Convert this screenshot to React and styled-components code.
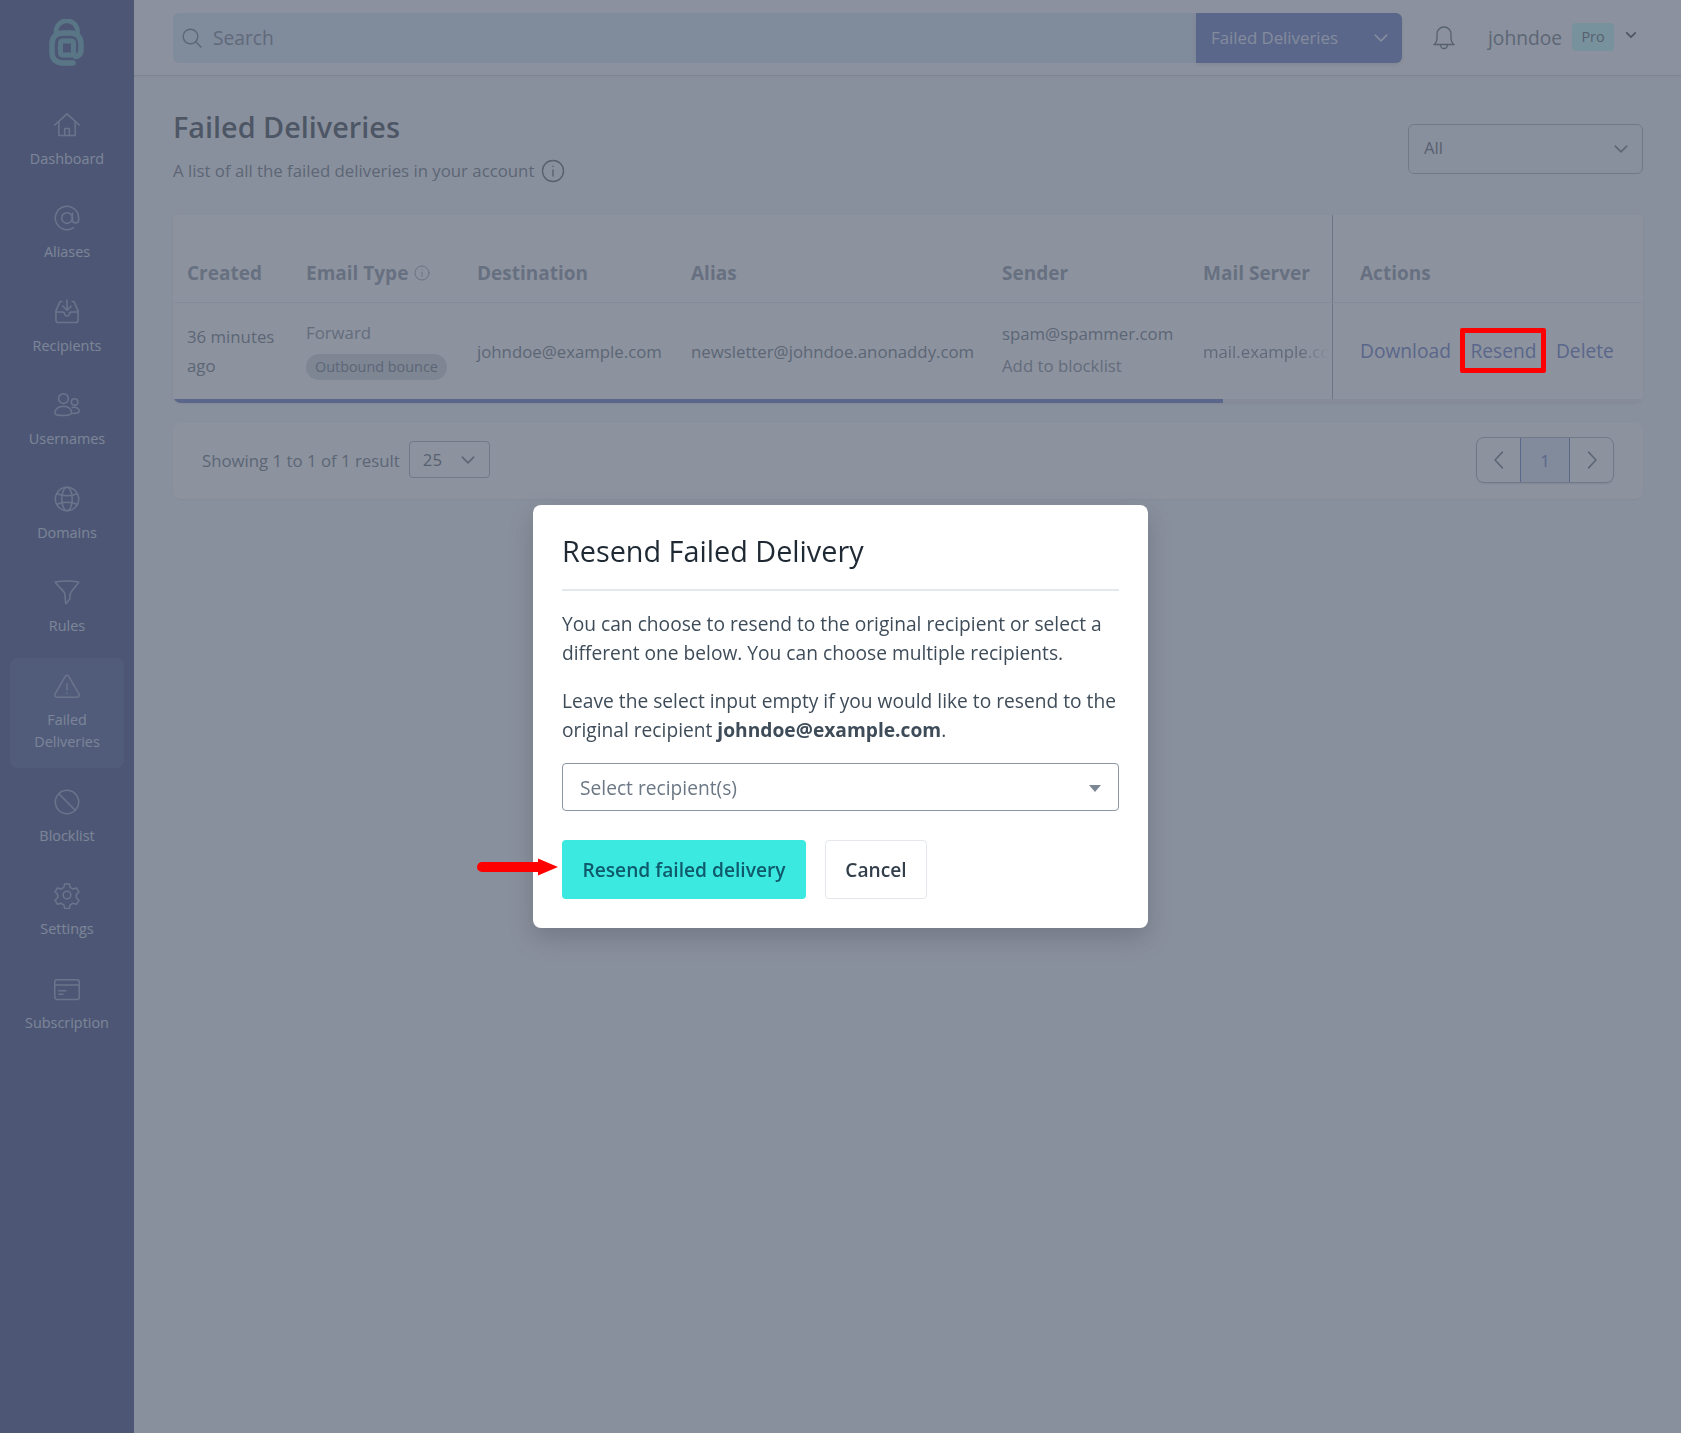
import React from 'react'
import styled, { createGlobalStyle } from 'styled-components'

const GlobalStyle = createGlobalStyle`
html, body { margin: 0; padding: 0; }
body {
  background: #f5f7fa;
  font-family: "Open Sans", "Liberation Sans", sans-serif;
  color: #52606d;
}
* { box-sizing: border-box; }
`;

const Page = styled.div`
display: flex;
min-height: 100vh;
`;

const Sidebar = styled.nav`
width: 134px;
flex-shrink: 0;
background: #1f2e6b;
display: flex;
flex-direction: column;
align-items: center;
padding: 19px 10px 0;
`;

const LogoMark = styled.svg`
width: 38px;
height: 48px;
margin-bottom: 29px;
`;

const NavList = styled.div`
width: 100%;
display: flex;
flex-direction: column;
gap: 5.1px;
`;

const NavItem = styled.a`
display: flex;
flex-direction: column;
align-items: center;
padding: 14.5px 8px 15px;
border-radius: 8px;
text-align: center;
font-size: 14.4px;
line-height: 22px;
color: #c4cfe4;
background: ${props => props.$active ? '#2e3e80' : 'transparent'};
`;

const NavIcon = styled.svg`
width: 28px;
height: 28px;
margin-bottom: 9px;
fill: none;
stroke: #8494bd;
stroke-width: 1.3;
stroke-linecap: round;
stroke-linejoin: round;
`;

const Main = styled.div`
flex: 1;
min-width: 0;
`;

const TopBar = styled.header`
height: 76px;
display: flex;
align-items: center;
padding: 0 38px 0 39px;
background: #fbfcfd;
border-bottom: 1px solid #cbd2d9;
box-shadow: 0 1px 2px rgba(31, 41, 51, 0.08);
`;

const SearchGroup = styled.div`
width: 1229px;
height: 50px;
display: flex;
`;

const SearchBox = styled.div`
flex: 1;
display: flex;
align-items: center;
gap: 11px;
padding-left: 9px;
background: #d4e4f7;
border-radius: 6px 0 0 6px;
font-size: 19.2px;
color: #616e7c;
`;

const SearchIcon = styled.svg`
width: 20px;
height: 20px;
fill: none;
stroke: #52606d;
stroke-width: 1.4;
stroke-linecap: round;
`;

const ScopeSelect = styled.div`
width: 206px;
display: flex;
align-items: center;
justify-content: space-between;
padding: 0 13px 0 15px;
background: #4c63b6;
border-radius: 0 6px 6px 0;
box-shadow: 0 2px 4px rgba(31, 41, 51, 0.15);
font-size: 16.8px;
color: #dde5f7;
`;

const Chevron = styled.svg`
width: ${props => props.$size || 16}px;
height: ${props => props.$size || 16}px;
fill: none;
stroke: ${props => props.$color || '#52606d'};
stroke-width: ${props => props.$weight || 1.4};
stroke-linecap: round;
stroke-linejoin: round;
flex-shrink: 0;
`;

const Bell = styled.svg`
width: 24px;
height: 26px;
margin-left: 30px;
fill: none;
stroke: #3e4c59;
stroke-width: 1.3;
stroke-linecap: round;
stroke-linejoin: round;
`;

const UserName = styled.span`
margin-left: 32px;
font-size: 19.2px;
color: #52606d;
`;

const ProBadge = styled.span`
margin-left: 10px;
width: 42px;
height: 28px;
display: flex;
align-items: center;
justify-content: center;
border-radius: 4px;
background: #b4fffa;
font-size: 14.4px;
color: #3e4c59;
margin-top: -2px;
`;

const UserChevron = styled.span`
display: flex;
margin: -6px 0 0 11px;
`;

const Content = styled.main`
padding: 0 38px 0 39px;
`;

const PageHead = styled.div`
display: flex;
justify-content: space-between;
align-items: flex-start;
padding-top: 31px;
height: 139px;
`;

const PageTitle = styled.h1`
margin: 0 0 10px;
font-size: 28.8px;
line-height: 40px;
font-weight: 600;
color: #1f2933;
`;

const SubTitle = styled.p`
margin: 0;
display: flex;
align-items: center;
gap: 7px;
font-size: 16.8px;
line-height: 28px;
color: #52606d;
`;

const InfoIcon = styled.svg`
width: ${props => props.$size}px;
height: ${props => props.$size}px;
fill: none;
stroke: ${props => props.$color};
stroke-width: 1.4;
stroke-linecap: round;
flex-shrink: 0;
`;

const FilterSelect = styled.div`
width: 235px;
height: 50px;
margin-top: 17px;
display: flex;
align-items: center;
justify-content: space-between;
padding: 0 13px 0 15px;
border: 1px solid #9aa5b1;
border-radius: 6px;
font-size: 16.8px;
color: #3e4c59;
`;

const FilterLabel = styled.span`
margin-top: -3px;
`;

const TableCard = styled.section`
background: #fff;
border-radius: 4px 4px 8px 8px;
box-shadow: 0 1px 3px rgba(31, 41, 51, 0.12);
overflow: hidden;
`;

const Row = styled.div`
display: grid;
grid-template-columns: 119px 171px 214px 311px 201px 143px 1fr;
height: ${props => props.$height}px;
border-bottom: ${props => props.$divider ? '1px solid #e4e7eb' : 'none'};
`;

const HeadCell = styled.div`
display: flex;
align-items: center;
gap: 6px;
padding: 29px 0 0 ${props => props.$pad || 14}px;
font-size: 19px;
font-weight: 700;
color: #7b8794;
border-left: ${props => props.$sticky ? '1px solid #8a96a3' : 'none'};
`;

const Cell = styled.div`
display: flex;
flex-direction: column;
justify-content: center;
align-items: flex-start;
min-width: 0;
padding-left: ${props => props.$pad || 14}px;
font-size: 16.8px;
line-height: 29px;
color: #52606d;
border-left: ${props => props.$sticky ? '1px solid #8a96a3' : 'none'};
`;

const SenderAddress = styled.span`
margin-top: -4px;
line-height: 29px;
`;

const BlockLink = styled.span`
margin-top: 3px;
color: #6b7785;
`;

const TypeLabel = styled.span`
line-height: 26px;
margin-top: -3px;
color: #6b7785;
`;

const TypeBadge = styled.span`
height: 26px;
padding: 0 9px;
margin-top: 8px;
display: flex;
align-items: center;
border-radius: 14px;
background: #cbd2d9;
font-size: 14.4px;
color: #52606d;
`;

const ClippedText = styled.span`
display: block;
width: 100%;
white-space: nowrap;
overflow: hidden;
color: #616e7c;
-webkit-mask-image: linear-gradient(90deg, #000 75%, transparent 98%);
mask-image: linear-gradient(90deg, #000 75%, transparent 98%);
`;

const ActionRow = styled.div`
display: flex;
gap: 19.5px;
font-size: 19.2px;
margin-top: -2px;
`;

const ActionLink = styled.a`
position: relative;
color: #4c63b6;
`;

const Highlight = styled.span`
position: absolute;
top: -8px;
bottom: -8px;
left: -10px;
right: -10px;
border: 5px solid #ff0000;
border-radius: 2px;
z-index: 20;
`;

const ScrollTrack = styled.div`
height: 4px;
background: #e4e7eb;
`;

const ScrollThumb = styled.div`
height: 100%;
width: ${props => props.$percent}%;
background: #4c63b6;
`;

const FooterCard = styled.section`
margin-top: 20px;
height: 76px;
display: flex;
align-items: center;
justify-content: space-between;
padding: 0 29px 2px 29px;
background: #fff;
border-radius: 8px;
box-shadow: 0 1px 2px rgba(31, 41, 51, 0.08);
`;

const ResultCount = styled.div`
display: flex;
align-items: center;
gap: 9px;
font-size: 16.8px;
color: #52606d;
`;

const PerPage = styled.div`
width: 81px;
height: 37px;
margin-top: -1px;
display: flex;
align-items: center;
justify-content: space-between;
padding: 0 13px 0 13px;
border: 1px solid #9aa5b1;
border-radius: 4px;
font-size: 16.8px;
color: #3e4c59;
`;

const Pagination = styled.div`
display: flex;
height: 46px;
border: 1px solid #9aa5b1;
border-radius: 8px;
box-shadow: 0 1px 2px rgba(31, 41, 51, 0.2);
`;

const PageButton = styled.div`
width: ${props => props.$current ? 50 : 43}px;
display: flex;
align-items: center;
justify-content: center;
font-size: 16.8px;
color: #4c63b6;
background: ${props => props.$current ? '#d8e4f8' : 'transparent'};
border-left: ${props => props.$current ? '1px solid #4c63b6' : 'none'};
border-right: ${props => props.$current ? '1px solid #4c63b6' : 'none'};
`;

const Overlay = styled.div`
position: fixed;
inset: 0;
z-index: 10;
display: flex;
align-items: center;
justify-content: center;
background: rgba(95, 104, 121, 0.72);
`;

const Modal = styled.div`
position: relative;
width: 615px;
padding: 28px 29px 29px;
background: #fff;
border-radius: 8px;
box-shadow: 0 10px 24px rgba(31, 41, 51, 0.22);
`;

const ModalTitle = styled.h2`
margin: 0;
padding-bottom: 20px;
font-size: 28.8px;
line-height: 36px;
font-weight: 400;
color: #1f2933;
border-bottom: 2px solid #e4e7eb;
`;

const ModalText = styled.p`
margin: ${props => props.$gap}px 0 0;
font-size: 19.2px;
line-height: 29px;
color: #3e4c59;
`;

const RecipientSelect = styled.div`
margin-top: 19.5px;
height: 48px;
display: flex;
align-items: center;
justify-content: space-between;
padding: 0 17px;
border: 1px solid #8a96a3;
border-radius: 4px;
font-size: 19.2px;
color: #6b7785;
`;

const Caret = styled.span`
width: 0;
height: 0;
border-left: 6px solid transparent;
border-right: 6px solid transparent;
border-top: 7px solid #7b8794;
margin-top: 2px;
`;

const ButtonRow = styled.div`
position: relative;
margin-top: 29px;
display: flex;
gap: 19px;
`;

const PrimaryButton = styled.button`
width: 244px;
height: 59px;
border: none;
border-radius: 4px;
background: #3ce9e1;
font-family: inherit;
font-size: 19.2px;
font-weight: 600;
color: #0e5a6b;
`;

const CancelButton = styled.button`
width: 102px;
height: 59px;
border: 1px solid #e4e7eb;
border-radius: 4px;
background: #fff;
font-family: inherit;
font-size: 19.2px;
font-weight: 600;
color: #323f4b;
`;

const ArrowMark = styled.svg`
position: absolute;
left: -85px;
top: 17px;
width: 82px;
height: 20px;
`;

const navItems = [
  { label: 'Dashboard', icon: <><path d="M1.500 12 12 2.500 22.500 12" /><path d="M5 9.500v11.500h14V9.500" /><path d="M10 21v-6h4v6" /></> },
  { label: 'Aliases', icon: <><circle cx="12" cy="12" r="4.600" /><path d="M16.600 8v5.500a2.700 2.700 0 0 0 5.400 0V12a10 10 0 1 0-4.400 8.300" /></> },
  { label: 'Recipients', icon: <><path d="M7.500 3H6L2.500 11v8a2 2 0 0 0 2 2h15a2 2 0 0 0 2-2v-8L18 3h-1.500" /><path d="M2.500 12H8a2 2 0 0 1 2 2 2 2 0 0 0 2 1.500 2 2 0 0 0 2-1.500 2 2 0 0 1 2-2h5.500" /><path d="M12 2v8" /><path d="m8.500 7 3.500 3.500L15.500 7" /></> },
  { label: 'Usernames', icon: <><circle cx="9" cy="6.500" r="4.200" /><circle cx="18.500" cy="9.500" r="2.800" /><path d="M1.500 19c0-3.500 3.500-6 7.500-6s7 2.500 7 5.500c0 1.500-3 2.500-7 2.500s-7.500-.5-7.500-2z" /><path d="M16.500 14.200c3-.8 6 .5 6 3.200 0 1.300-2 1.800-5.500 1.800" /></> },
  { label: 'Domains', icon: <><circle cx="12" cy="12" r="10" /><ellipse cx="12" cy="12" rx="4.500" ry="10" /><path d="M3.500 7.500c5 2.200 12 2.200 17 0" /><path d="M3.500 16.500c5-2.200 12-2.200 17 0" /></> },
  { label: 'Rules', icon: <path d="M2 3.500c6-1 14-1 20 0-.3 1.500-6 7-7 9.500-.6 1.500-.6 3.500-.6 5l-3.400 4c-.6-3-.4-6-1-9C9.500 11 2.500 5.500 2 3.500z" /> },
  { label: 'Failed Deliveries', active: true, icon: <><path d="M10.500 3.800 1.800 18.700c-.8 1.500.2 3 1.700 3h17c1.500 0 2.500-1.500 1.700-3L13.500 3.800c-.8-1.300-2.200-1.300-3 0z" /><path d="M12 10v5.500" /><path d="M12 18.300v.2" /></> },
  { label: 'Blocklist', icon: <><circle cx="12" cy="12" r="10" /><path d="m5 5 14 14" /></> },
  { label: 'Settings', icon: <><circle cx="12" cy="12" r="3.300" /><path d="M10 2.500h4l.7 3 2.500 1.400 3-.9 2 3.400-2.200 2.200v2.800l2.200 2.200-2 3.400-3-.9-2.500 1.400-.7 3h-4l-.7-3-2.500-1.400-3 .9-2-3.400 2.200-2.200v-2.800L1.800 9.400l2-3.400 3 .9 2.500-1.400z" /></> },
  { label: 'Subscription', icon: <><rect x="1.500" y="4" width="21" height="17" rx="2" /><path d="M1.500 8.500h21" /><path d="M5 13.500h6" /><path d="M5 16.500h3.500" /></> },
];

function Logo() {
  return (
    <LogoMark viewBox="0 0 38 48" fill="none">
      <path d="M8 17V12.500a10.800 10.800 0 0 1 21.600 0V17" stroke="#4a9aa8" strokeWidth="4.500" />
      <path d="M25 44H15C8 44 4 40 4 33V25C4 18 8 14 15 14h7c7 0 11 4 11 11v6c0 4-2 6-5.500 6.500" stroke="#4a9aa8" strokeWidth="5.500" strokeLinecap="round" />
      <rect x="12.500" y="22" width="13" height="14" rx="2" stroke="#4a9aa8" strokeWidth="5" />
    </LogoMark>
  )
}

const ChevronDown = props => (
  <Chevron viewBox="0 0 14 14" {...props}><path d="m2 4.500 5 5 5-5" /></Chevron>
)

const InfoGlyph = () => (
  <>
    <circle cx="12" cy="12" r="10.500" />
    <path d="M12 11v6" />
    <path d="M12 7.300v.2" />
  </>
)

class App extends React.Component {
  render() {
    return (
      <React.Fragment>
        <GlobalStyle />
        <Page>
          <Sidebar>
            <Logo />
            <NavList>
              {navItems.map(item => (
                <NavItem key={item.label} $active={item.active}>
                  <NavIcon viewBox="0 0 24 24">{item.icon}</NavIcon>
                  {item.label}
                </NavItem>
              ))}
            </NavList>
          </Sidebar>
          <Main>
            <TopBar>
              <SearchGroup>
                <SearchBox>
                  <SearchIcon viewBox="0 0 20 20"><circle cx="8.500" cy="8.500" r="7.300" /><path d="m14 14 5 5" /></SearchIcon>
                  Search
                </SearchBox>
                <ScopeSelect>
                  Failed Deliveries
                  <ChevronDown $color="#dde5f7" />
                </ScopeSelect>
              </SearchGroup>
              <Bell viewBox="0 0 24 26">
                <path d="M12 2a7 7 0 0 0-7 7v5c0 2.500-1.200 4-3 5.500h20c-1.800-1.500-3-3-3-5.500V9a7 7 0 0 0-7-7z" />
                <path d="M8.500 20a3.500 3.500 0 0 0 7 0" />
              </Bell>
              <UserName>johndoe</UserName>
              <ProBadge>Pro</ProBadge>
              <UserChevron><ChevronDown $size={12} $weight={2} $color="#1f2933" /></UserChevron>
            </TopBar>
            <Content>
              <PageHead>
                <div>
                  <PageTitle>Failed Deliveries</PageTitle>
                  <SubTitle>
                    A list of all the failed deliveries in your account
                    <InfoIcon $size={24} $color="#3e4c59" viewBox="0 0 24 24"><InfoGlyph /></InfoIcon>
                  </SubTitle>
                </div>
                <FilterSelect>
                  <FilterLabel>All</FilterLabel>
                  <ChevronDown />
                </FilterSelect>
              </PageHead>
              <TableCard>
                <Row $height={88} $divider>
                  <HeadCell>Created</HeadCell>
                  <HeadCell>
                    Email Type
                    <InfoIcon $size={16} $color="#7b8794" viewBox="0 0 24 24"><InfoGlyph /></InfoIcon>
                  </HeadCell>
                  <HeadCell>Destination</HeadCell>
                  <HeadCell>Alias</HeadCell>
                  <HeadCell>Sender</HeadCell>
                  <HeadCell>Mail Server</HeadCell>
                  <HeadCell $sticky $pad={27}>Actions</HeadCell>
                </Row>
                <Row $height={96}>
                  <Cell>36 minutes ago</Cell>
                  <Cell>
                    <TypeLabel>Forward</TypeLabel>
                    <TypeBadge>Outbound bounce</TypeBadge>
                  </Cell>
                  <Cell>johndoe@example.com</Cell>
                  <Cell>newsletter@johndoe.anonaddy.com</Cell>
                  <Cell>
                    <SenderAddress>spam@spammer.com</SenderAddress>
                    <BlockLink>Add to blocklist</BlockLink>
                  </Cell>
                  <Cell><ClippedText>mail.example.com</ClippedText></Cell>
                  <Cell $sticky $pad={27}>
                    <ActionRow>
                      <ActionLink>Download</ActionLink>
                      <ActionLink>Resend<Highlight /></ActionLink>
                      <ActionLink>Delete</ActionLink>
                    </ActionRow>
                  </Cell>
                </Row>
                <ScrollTrack><ScrollThumb $percent={71.4} /></ScrollTrack>
              </TableCard>
              <FooterCard>
                <ResultCount>
                  Showing 1 to 1 of 1 result
                  <PerPage>25<ChevronDown /></PerPage>
                </ResultCount>
                <Pagination>
                  <PageButton><Chevron $size={18} viewBox="0 0 16 16"><path d="M11 1 4.500 8l6.500 7" /></Chevron></PageButton>
                  <PageButton $current>1</PageButton>
                  <PageButton><Chevron $size={18} viewBox="0 0 16 16"><path d="M5 1l6.500 7L5 15" /></Chevron></PageButton>
                </Pagination>
              </FooterCard>
            </Content>
          </Main>
        </Page>
        <Overlay>
          <Modal>
            <ModalTitle>Resend Failed Delivery</ModalTitle>
            <ModalText $gap={17.5}>You can choose to resend to the original recipient or select a different one below. You can choose multiple recipients.</ModalText>
            <ModalText $gap={19}>Leave the select input empty if you would like to resend to the original recipient <b>johndoe@example.com</b>.</ModalText>
            <RecipientSelect>
              Select recipient(s)
              <Caret />
            </RecipientSelect>
            <ButtonRow>
              <ArrowMark viewBox="0 0 82 20">
                <path d="M5 5h56V1.500L81 10 61 18.500V15H5a5 5 0 0 1 0-10z" fill="#ff0000" />
              </ArrowMark>
              <PrimaryButton>Resend failed delivery</PrimaryButton>
              <CancelButton>Cancel</CancelButton>
            </ButtonRow>
          </Modal>
        </Overlay>
      </React.Fragment>
    )
  }
}

export default App
